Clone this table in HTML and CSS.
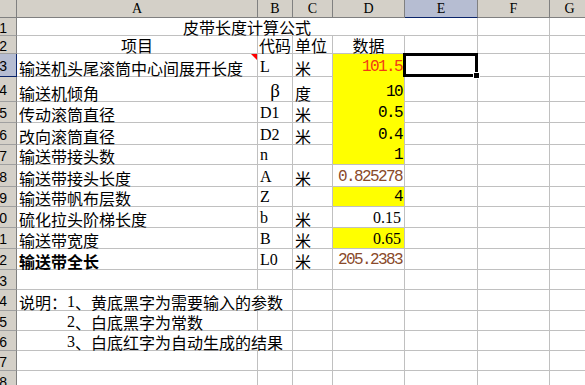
FILE: index.html
```html
<!DOCTYPE html>
<html lang="zh-CN">
<head>
<meta charset="utf-8">
<title>皮带长度计算公式</title>
<link rel="stylesheet" href="styles.css">
</head>
<body>
<div class="sheet">
  <div class="hd corner"></div>
  <div class="hd">A</div>
  <div class="hd">B</div>
  <div class="hd">C</div>
  <div class="hd">D</div>
  <div class="hd sel">E</div>
  <div class="hd">F</div>
  <div class="hd">G</div>

  <div class="hd rh">1</div>
  <div class="c span5 ctr">皮带长度计算公式</div>
  <div class="c"></div><div class="c"></div>

  <div class="hd rh">2</div>
  <div class="c ctr">项目</div>
  <div class="c tight">代码</div>
  <div class="c">单位</div>
  <div class="c ctr">数据</div>
  <div class="c"></div><div class="c"></div><div class="c"></div>

  <div class="hd rh sel">3</div>
  <div class="c note">输送机头尾滚筒中心间展开长度</div>
  <div class="c code">L</div>
  <div class="c">米</div>
  <div class="c y yy r num red">101.5</div>
  <div class="c active"></div>
  <div class="c"></div><div class="c"></div>

  <div class="hd rh">4</div>
  <div class="c">输送机倾角</div>
  <div class="c code beta ctr">β</div>
  <div class="c">度</div>
  <div class="c y yy r num">10</div>
  <div class="c"></div><div class="c"></div><div class="c"></div>

  <div class="hd rh">5</div>
  <div class="c">传动滚筒直径</div>
  <div class="c code">D1</div>
  <div class="c">米</div>
  <div class="c y yy r num">0.5</div>
  <div class="c"></div><div class="c"></div><div class="c"></div>

  <div class="hd rh">6</div>
  <div class="c">改向滚筒直径</div>
  <div class="c code">D2</div>
  <div class="c">米</div>
  <div class="c y yy r num">0.4</div>
  <div class="c"></div><div class="c"></div><div class="c"></div>

  <div class="hd rh">7</div>
  <div class="c">输送带接头数</div>
  <div class="c code">n</div>
  <div class="c"></div>
  <div class="c y r num">1</div>
  <div class="c"></div><div class="c"></div><div class="c"></div>

  <div class="hd rh">8</div>
  <div class="c">输送带接头长度</div>
  <div class="c code">A</div>
  <div class="c">米</div>
  <div class="c r num brown">0.825278</div>
  <div class="c"></div><div class="c"></div><div class="c"></div>

  <div class="hd rh">9</div>
  <div class="c">输送带帆布层数</div>
  <div class="c code">Z</div>
  <div class="c"></div>
  <div class="c y r num">4</div>
  <div class="c"></div><div class="c"></div><div class="c"></div>

  <div class="hd rh">10</div>
  <div class="c">硫化拉头阶梯长度</div>
  <div class="c code">b</div>
  <div class="c">米</div>
  <div class="c r code">0.15</div>
  <div class="c"></div><div class="c"></div><div class="c"></div>

  <div class="hd rh">11</div>
  <div class="c">输送带宽度</div>
  <div class="c code">B</div>
  <div class="c">米</div>
  <div class="c y r code">0.65</div>
  <div class="c"></div><div class="c"></div><div class="c"></div>

  <div class="hd rh">12</div>
  <div class="c bold">输送带全长</div>
  <div class="c code">L0</div>
  <div class="c">米</div>
  <div class="c r num brown">205.2383</div>
  <div class="c"></div><div class="c"></div><div class="c"></div>

  <div class="hd rh">13</div>
  <div class="c"></div><div class="c"></div><div class="c"></div><div class="c"></div>
  <div class="c"></div><div class="c"></div><div class="c"></div>

  <div class="hd rh">14</div>
  <div class="c span2">说明：<span class="code">1</span>、黄底黑字为需要输入的参数</div>
  <div class="c"></div><div class="c"></div><div class="c"></div><div class="c"></div><div class="c"></div>

  <div class="hd rh">15</div>
  <div class="c indent"><span class="code">2</span>、白底黑字为常数</div>
  <div class="c"></div><div class="c"></div><div class="c"></div>
  <div class="c"></div><div class="c"></div><div class="c"></div>

  <div class="hd rh">16</div>
  <div class="c span2 indent"><span class="code">3</span>、白底红字为自动生成的结果</div>
  <div class="c"></div><div class="c"></div><div class="c"></div><div class="c"></div><div class="c"></div>

  <div class="hd rh">17</div>
  <div class="c"></div><div class="c"></div><div class="c"></div><div class="c"></div>
  <div class="c"></div><div class="c"></div><div class="c"></div>

  <div class="hd rh">18</div>
  <div class="c"></div><div class="c"></div><div class="c"></div><div class="c"></div>
  <div class="c"></div><div class="c"></div><div class="c"></div>
</div>
</body>
</html>
```

FILE: styles.css
```css
html, body {
  margin: 0;
  padding: 0;
  background: #ffffff;
}

body {
  width: 585px;
  height: 385px;
  overflow: hidden;
}

.sheet {
  display: grid;
  grid-template-columns: 17px 241px 35px 40px 72px 73px 72px 40px;
  grid-template-rows: 18px 18px 18px 23px 25px 21px 22px 20px 22px 20px 21px 21px 21px 20px 21px 20px 20px 20px 20px;
  font-family: "Noto Sans CJK SC", sans-serif;
  font-size: 16px;
  color: #000000;
}

/* headers */
.hd {
  box-sizing: border-box;
  background: #d4d0c8;
  border-right: 1px solid #808080;
  border-bottom: 1px solid #808080;
  display: flex;
  align-items: center;
  justify-content: center;
  font-family: "Liberation Serif", serif;
  font-size: 14px;
  line-height: 14px;
  color: #000000;
  padding-top: 1px;
}

.hd.rh {
  justify-content: flex-end;
  padding-right: 9px;
  padding-top: 2px;
  overflow: hidden;
  white-space: nowrap;
  font-family: "Liberation Sans", sans-serif;
  font-size: 14px;
  border-bottom-color: #a0a0a0;
}

.hd.sel {
  background: #b6bdd2;
  border-bottom-color: #0a246a;
}

.hd.rh.sel {
  border-bottom-color: #0a246a;
  border-right-color: #0a246a;
}

/* cells */
.c {
  box-sizing: border-box;
  border-right: 1px solid #c0c0c0;
  border-bottom: 1px solid #c0c0c0;
  display: flex;
  align-items: flex-end;
  padding: 0 2px 0 2px;
  white-space: nowrap;
  line-height: 16px;
  position: relative;
  background: #ffffff;
}

.span5 { grid-column: span 5; }
.span2 { grid-column: span 2; }

.ctr { justify-content: center; }
.r { justify-content: flex-end; padding-right: 3px; }
.tight { padding: 0 0 0 1px; }

.indent { padding-left: 50px; }

.bold { font-weight: 700; }

.code {
  font-family: "Liberation Serif", serif;
  font-size: 16px;
}

.c.code { padding-bottom: 1px; }

.beta {
  font-size: 19px;
  line-height: 19px;
  padding-bottom: 2px;
}

.num {
  font-family: "Liberation Mono", monospace;
  font-size: 16px;
  letter-spacing: -1.6px;
  padding-right: 2px;
  padding-bottom: 1px;
}

.red { color: #f23a14; }
.brown { color: #8a4a2a; }

.y { background: #ffff00; }
.yy { border-bottom-color: #ffff00; }

/* comment indicator */
.note::after {
  content: "";
  position: absolute;
  top: 0;
  right: 0;
  width: 0;
  height: 0;
  border-top: 6px solid #ff0000;
  border-left: 6px solid transparent;
}

/* active cell selection */
.active::after {
  content: "";
  position: absolute;
  top: -1px;
  left: -2px;
  right: -1px;
  bottom: -1px;
  border: 3px solid #000000;
  pointer-events: none;
}

.active::before {
  content: "";
  position: absolute;
  right: -3px;
  bottom: -3px;
  width: 5px;
  height: 5px;
  background: #000000;
  border: 1px solid #ffffff;
  z-index: 2;
}
```
